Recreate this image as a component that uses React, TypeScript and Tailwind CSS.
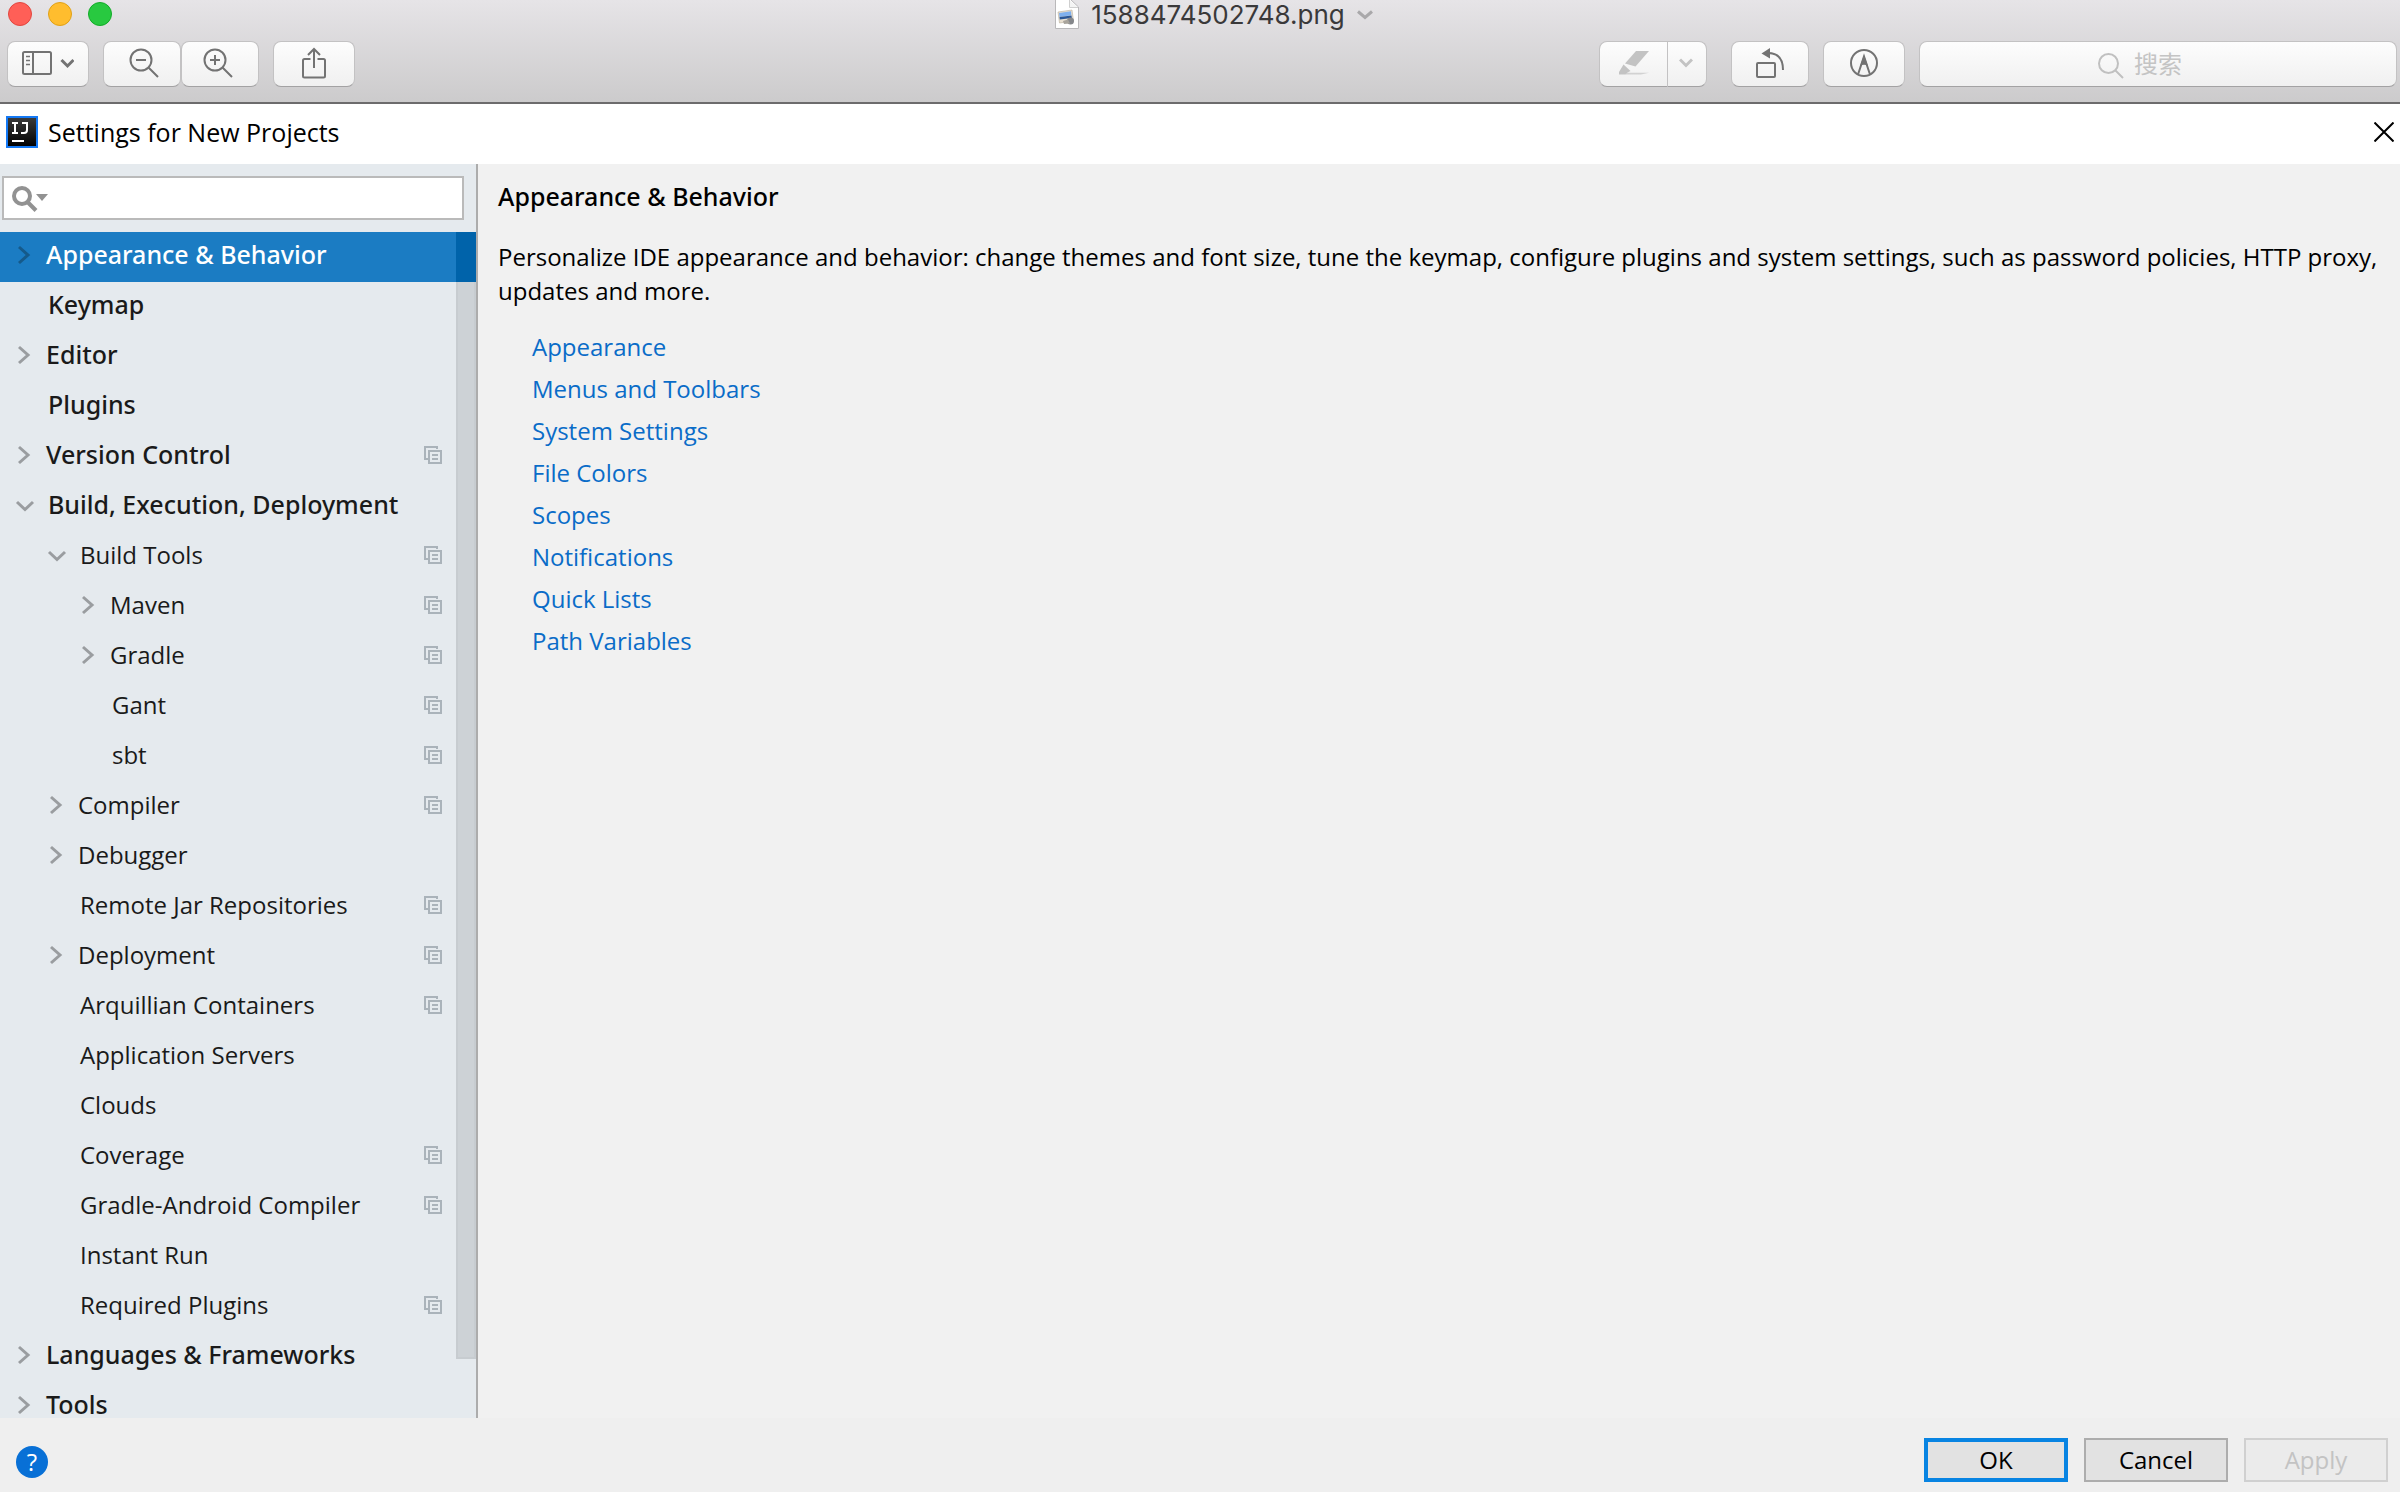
import type { ReactNode } from 'react'
import clsx from 'clsx'

interface TreeItem {
  label: string
  level: number
  state?: 'open' | 'closed'
  shared?: boolean
  selected?: boolean
}

const treeItems: TreeItem[] = [
  { label: 'Appearance & Behavior', level: 0, state: 'closed', selected: true },
  { label: 'Keymap', level: 0 },
  { label: 'Editor', level: 0, state: 'closed' },
  { label: 'Plugins', level: 0 },
  { label: 'Version Control', level: 0, state: 'closed', shared: true },
  { label: 'Build, Execution, Deployment', level: 0, state: 'open' },
  { label: 'Build Tools', level: 1, state: 'open', shared: true },
  { label: 'Maven', level: 2, state: 'closed', shared: true },
  { label: 'Gradle', level: 2, state: 'closed', shared: true },
  { label: 'Gant', level: 2, shared: true },
  { label: 'sbt', level: 2, shared: true },
  { label: 'Compiler', level: 1, state: 'closed', shared: true },
  { label: 'Debugger', level: 1, state: 'closed' },
  { label: 'Remote Jar Repositories', level: 1, shared: true },
  { label: 'Deployment', level: 1, state: 'closed', shared: true },
  { label: 'Arquillian Containers', level: 1, shared: true },
  { label: 'Application Servers', level: 1 },
  { label: 'Clouds', level: 1 },
  { label: 'Coverage', level: 1, shared: true },
  { label: 'Gradle-Android Compiler', level: 1, shared: true },
  { label: 'Instant Run', level: 1 },
  { label: 'Required Plugins', level: 1, shared: true },
  { label: 'Languages & Frameworks', level: 0, state: 'closed' },
  { label: 'Tools', level: 0, state: 'closed' },
]

const links = [
  'Appearance',
  'Menus and Toolbars',
  'System Settings',
  'File Colors',
  'Scopes',
  'Notifications',
  'Quick Lists',
  'Path Variables',
]

const indents = ['pl-3', 'pl-11', 'pl-[76px]']

interface ToolbarButtonProps {
  label: string
  className?: string
  children: ReactNode
}

const ToolbarButton = ({ label, className, children }: ToolbarButtonProps) => (
  <button
    type="button"
    aria-label={label}
    className={clsx(
      'flex h-[46px] items-center justify-center rounded-lg border border-[#c3c2c3] border-b-[#a3a2a3] bg-linear-to-b from-[#fdfdfd] to-[#f0f0f0] pb-0.5 text-[#737373]',
      className,
    )}
  >
    {children}
  </button>
)

const Magnifier = ({ sign }: { sign: 'plus' | 'minus' }) => (
  <svg width="30" height="30" viewBox="0 0 30 30" fill="none" stroke="currentColor" strokeWidth="2">
    <circle cx="12" cy="12" r="10.5" />
    <path d="M19.5 19.5 29 29M7 12h10" />
    {sign === 'plus' && <path d="M12 7v10" />}
  </svg>
)

const WindowHeader = () => (
  <header className="flex h-[104px] shrink-0 flex-col border-b-2 border-[#6c6b6c] bg-linear-to-b from-[#e6e4e7] to-[#cccbcc]">
    <div className="grid h-[30px] grid-cols-[1fr_auto_1fr] items-start">
      <div className="flex gap-4 pt-0.5 pl-2">
        <button type="button" aria-label="Close window" className="size-6 rounded-full border border-[#e2463f] bg-[#ff5f57]" />
        <button type="button" aria-label="Minimize window" className="size-6 rounded-full border border-[#e1a116] bg-[#ffbd2e]" />
        <button type="button" aria-label="Zoom window" className="size-6 rounded-full border border-[#12ac28] bg-[#28c940]" />
      </div>
      <div className="flex items-center pl-7">
        <svg width="24" height="30" viewBox="0 0 24 30">
          <path d="M0.500 -1H15l8.500 8V28.500H0.500z" fill="#fff" stroke="#b9b8ba" />
          <path d="M14.500 0v7.500h8.500" fill="#f4f4f4" stroke="#cfcfcf" />
          <path d="m3 12 14-2 1.500 11-14 2z" fill="#e8dfd0" stroke="#b9ae9c" strokeWidth=".6" />
          <path d="m4 13 12-1.700.4 4L4.500 17z" fill="#7fb0ee" />
          <path d="m4.500 17 12-1.500.3 2.500-12 1.500z" fill="#2b5797" />
          <circle cx="15.500" cy="21" r="3.500" fill="#85878b" />
          <path d="m8 21 5-1.500 2 4-6 .5z" fill="#a8a49c" />
        </svg>
        <h1 className="ml-3 font-['Inter','Liberation_Sans',sans-serif] text-[26px] leading-[30px] text-[#3a393a]">1588474502748.png</h1>
        <svg className="ml-3" width="16" height="10" viewBox="0 0 16 10" fill="none" stroke="#a9a8aa" strokeWidth="3">
          <path d="m1 1.500 7 6 7-6" />
        </svg>
      </div>
    </div>

    <div className="mt-[11px] flex pr-[3px] pl-[7px]">
      <ToolbarButton label="View" className="w-[82px]">
        <svg width="52" height="24" viewBox="0 0 52 24" fill="none" stroke="currentColor" strokeWidth="2">
          <rect x="1" y="1" width="28" height="22" rx="1.500" />
          <path d="M11 1v22" />
          <path d="M4 5.500h4M4 9.500h4M4 13.500h4" strokeWidth="1.500" />
          <path d="m39.500 9 6 6 6-6" strokeWidth="3" />
        </svg>
      </ToolbarButton>
      <ToolbarButton label="Zoom out" className="ml-3.5 w-[78px] pl-1">
        <Magnifier sign="minus" />
      </ToolbarButton>
      <ToolbarButton label="Zoom in" className="w-[78px] pr-1">
        <Magnifier sign="plus" />
      </ToolbarButton>
      <ToolbarButton label="Share" className="ml-3.5 w-[82px]">
        <svg width="24" height="32" viewBox="0 0 24 32" fill="none" stroke="currentColor" strokeWidth="2">
          <path d="M8.500 12H2.500q-1.500 0-1.500 1.500V29q0 1.500 1.500 1.500h19q1.500 0 1.500-1.500V13.500q0-1.500-1.500-1.500h-6" />
          <path d="M12 21V2M6 8l6-6 6 6" />
        </svg>
      </ToolbarButton>

      <div className="ml-auto flex">
        <ToolbarButton label="Highlight" className="w-[69px] rounded-r-none text-[#c3c3c3]">
          <svg width="32" height="26" viewBox="0 0 32 26" fill="currentColor">
            <path d="M18 1h13L17.500 16.500 7 13.500z" />
            <path d="m5.500 14.500 7 6.500-3 1.500L7 24.500H1V22z" />
            <path d="M7 22.800h24l-8 1.700H7z" opacity=".7" />
          </svg>
        </ToolbarButton>
        <ToolbarButton label="Highlight color" className="w-[39px] rounded-l-none border-l-0 pr-0.5 text-[#c3c3c3]">
          <svg width="14" height="10" viewBox="0 0 14 10" fill="none" stroke="currentColor" strokeWidth="3">
            <path d="m1 1.500 6 6 6-6" />
          </svg>
        </ToolbarButton>
        <ToolbarButton label="Rotate" className="ml-6 w-[78px]">
          <svg width="28" height="32" viewBox="0 0 28 32" fill="none" stroke="currentColor" strokeWidth="2">
            <rect x="1" y="16" width="18" height="14" rx="1" />
            <path d="M12 6c10 0 15 6 15 17" />
            <path d="M5.500 6.500 14 1v10.500z" fill="currentColor" stroke="none" />
          </svg>
        </ToolbarButton>
        <ToolbarButton label="Markup" className="ml-3.5 w-[82px]">
          <svg width="28" height="28" viewBox="0 0 28 28" fill="none" stroke="currentColor" strokeWidth="2">
            <circle cx="14" cy="14" r="13" />
            <path d="M8 25.500 14 7.500l6 18" />
            <path d="m14 6 4 11q-4-2.500-8 0z" fill="currentColor" stroke="none" />
          </svg>
        </ToolbarButton>
        <div className="relative ml-3.5 w-[478px]">
          <input
            type="text"
            aria-label="搜索"
            placeholder="搜索"
            className="h-[46px] w-full rounded-lg border border-[#c3c2c3] border-b-[#a3a2a3] bg-linear-to-b from-[#fdfdfd] to-[#f0f0f0] text-center font-['Inter','Noto_Sans_CJK_SC',sans-serif] text-2xl placeholder:text-[#c4c4c4]"
          />
          <svg className="absolute top-3 left-1/2 -ml-[60px]" width="26" height="26" viewBox="0 0 26 26" fill="none" stroke="#c0c0c0" strokeWidth="2">
            <circle cx="10.500" cy="10.500" r="9.500" />
            <path d="m17.500 17.500 7.500 7.500" />
          </svg>
        </div>
      </div>
    </div>
  </header>
)

const DialogTitle = () => (
  <div className="flex h-[60px] shrink-0 items-center bg-white pr-1.5 pb-1 pl-1.5">
    <svg width="32" height="32" viewBox="0 0 32 32">
      <defs>
        <linearGradient id="ij" x1="0" y1="0" x2="0" y2="1">
          <stop offset="0" stopColor="#3c3c3c" />
          <stop offset="1" stopColor="#000" />
        </linearGradient>
      </defs>
      <rect x="1" y="1" width="30" height="30" fill="url(#ij)" stroke="#1479f5" strokeWidth="2" />
      <g fill="none" stroke="#fff" strokeWidth="2">
        <path d="M6 7h6M9 7v10M6 17h6M16 7h6M21 7v7q0 3-3 3h-3" />
        <path d="M6 25h12" />
      </g>
    </svg>
    <h2 className="ml-2.5 text-[25px] leading-8 text-black">Settings for New Projects</h2>
    <button type="button" aria-label="Close" className="ml-auto">
      <svg width="20" height="20" viewBox="0 0 20 20" fill="none" stroke="#000" strokeWidth="2">
        <path d="m0.500.500 19 19M19.500.500l-19 19" />
      </svg>
    </button>
  </div>
)

const Arrow = ({ state }: { state?: 'open' | 'closed' }) => (
  <svg className="shrink-0" width="24" height="24" viewBox="0 0 24 24" fill="none" stroke="currentColor" strokeWidth="3">
    {state === 'closed' && <path d="m7 4 9 8-9 8" />}
    {state === 'open' && <path d="m5 9 8 7.500L21 9" />}
  </svg>
)

const SharedIcon = () => (
  <svg className="mr-[34px] ml-auto shrink-0" width="18" height="18" viewBox="0 0 18 18" fill="none" stroke="#aab3ba" strokeWidth="2">
    <path d="M4 13H1V1h12v2" />
    <rect x="5" y="5" width="12" height="12" />
    <path d="M8 9h6M8 13h6" />
  </svg>
)

const Sidebar = () => (
  <aside className="flex w-[478px] shrink-0 flex-col overflow-hidden border-r-2 border-[#acacac] bg-[#e5eaee] pt-3">
    <div className="relative mr-3 ml-0.5 shrink-0">
      <input
        type="text"
        aria-label="Search settings"
        className="block h-11 w-full border-2 border-[#bababa] bg-white pl-14 text-2xl outline-none"
      />
      <svg className="absolute top-2 left-2.5" width="38" height="28" viewBox="0 0 38 28" fill="none" stroke="#929292" strokeWidth="4">
        <circle cx="10" cy="12" r="8" />
        <path d="m15.500 18 8.500 8.500" />
        <path d="M24 10h12l-6 7z" fill="#929292" stroke="none" />
      </svg>
    </div>
    <div className="relative mt-3 min-h-0 flex-1 overflow-hidden">
      <ul>
        {treeItems.map((item) => (
          <li key={item.label}>
            <button
              type="button"
              className={clsx(
                'flex h-[50px] w-full items-center pb-1 text-left',
                indents[item.level],
                item.level === 0 ? "font-['Noto_Sans','Open_Sans',sans-serif] text-[25px] font-medium" : 'text-2xl',
                item.selected ? 'bg-[#1b7cc3] text-white' : 'text-[#1a1a1a]',
              )}
            >
              <span className={item.selected ? 'text-[#155a8a]' : 'text-[#9a9da0]'}>
                <Arrow state={item.state} />
              </span>
              <span className={clsx('whitespace-nowrap', item.state === 'closed' ? 'ml-2.5' : 'ml-3')}>{item.label}</span>
              {item.shared && <SharedIcon />}
            </button>
          </li>
        ))}
      </ul>
      {/* scrollbar thumb */}
      <div className="absolute top-0 right-0 h-[95%] w-5 border-2 border-t-0 border-[#c7ccd0] bg-[#cdd2d6]">
        <div className="-mx-0.5 h-[50px] bg-[#0063aa]" />
      </div>
    </div>
  </aside>
)

const Content = () => (
  <main className="min-w-0 flex-1 bg-[#f1f1f1] pt-[15px] pr-2 pl-5 text-black">
    <h3 className="font-['Noto_Sans','Open_Sans',sans-serif] text-[25px] leading-[34px] font-medium">Appearance &amp; Behavior</h3>
    <p className="mt-[27px] text-2xl leading-[34px]">
      Personalize IDE appearance and behavior: change themes and font size, tune the keymap, configure plugins and system
      settings, such as password policies, HTTP proxy, updates and more.
    </p>
    <ul className="mt-[18px] pl-[34px] text-2xl leading-[42px] text-[#0a6cc8]">
      {links.map((link) => (
        <li key={link}>
          <a href="#" className="hover:underline">{link}</a>
        </li>
      ))}
    </ul>
  </main>
)

const Footer = () => (
  <footer className="flex h-[74px] shrink-0 items-start gap-4 bg-[#efefef] pt-5 pr-3 pl-4 text-2xl text-black">
    <button
      type="button"
      aria-label="Help"
      className="mt-2 mr-auto flex size-8 items-center justify-center rounded-full bg-[#0870d6] leading-8 text-white"
    >
      ?
    </button>
    <button type="button" className="h-11 w-36 border-4 border-[#0884e2] bg-[#e2e2e2] leading-8">OK</button>
    <button type="button" className="h-11 w-36 border-2 border-[#adadad] bg-[#e2e2e2] leading-8">Cancel</button>
    <button type="button" disabled className="h-11 w-36 border-2 border-[#d0d0d0] bg-[#ebebeb] leading-8 text-[#c3c3c3]">Apply</button>
  </footer>
)

export default function App() {
  return (
    <div className="flex h-screen flex-col overflow-hidden bg-[#f1f1f1] font-['Open_Sans','Noto_Sans',sans-serif]">
      <WindowHeader />
      <DialogTitle />
      <div className="flex min-h-0 flex-1">
        <Sidebar />
        <Content />
      </div>
      <Footer />
    </div>
  )
}
